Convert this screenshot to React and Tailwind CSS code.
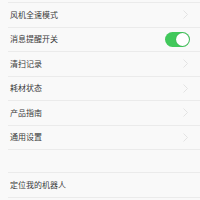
export default function App() {
  const rows = ['风机全速模式', '消息提醒开关', '清扫记录', '耗材状态', '产品指南', '通用设置'];

  return (
    <div
      className="w-[200px] h-[200px] overflow-hidden bg-[#f9f9f9] text-[#3a3a3a]"
      style={{ fontFamily: '"Noto Sans CJK SC", "Noto Sans", sans-serif' }}
    >
      <div className="h-[3px] border-b border-[#ebebeb] ml-[8px]" />
      {rows.map((label) => (
        <div key={label} className="h-[24.5px] ml-[8px] pl-[2px] pr-[10px] flex items-center justify-between border-b border-[#ebebeb]">
          <span className="text-[8px] leading-none">{label}</span>
          {label === '消息提醒开关' ? (
            <div className="w-[25px] h-[15px] rounded-full bg-[#41c85b] relative">
              <div className="absolute right-[1px] top-[1px] w-[13px] h-[13px] rounded-full bg-white shadow-[0_0_1px_rgba(0,0,0,0.3)]" />
            </div>
          ) : (
            <svg width="5" height="9" viewBox="0 0 5 9" className="mr-[2px]">
              <path d="M0.5 0.5 L4.5 4.5 L0.5 8.5" fill="none" stroke="#e3e3e3" strokeWidth="1" />
            </svg>
          )}
        </div>
      ))}
      <div className="h-[23px] ml-[8px] border-b border-[#ebebeb]" />
      <div className="h-[25px] ml-[8px] pl-[2px] flex items-center border-b border-[#ebebeb]">
        <span className="text-[8px] leading-none">定位我的机器人</span>
      </div>
    </div>
  );
}
